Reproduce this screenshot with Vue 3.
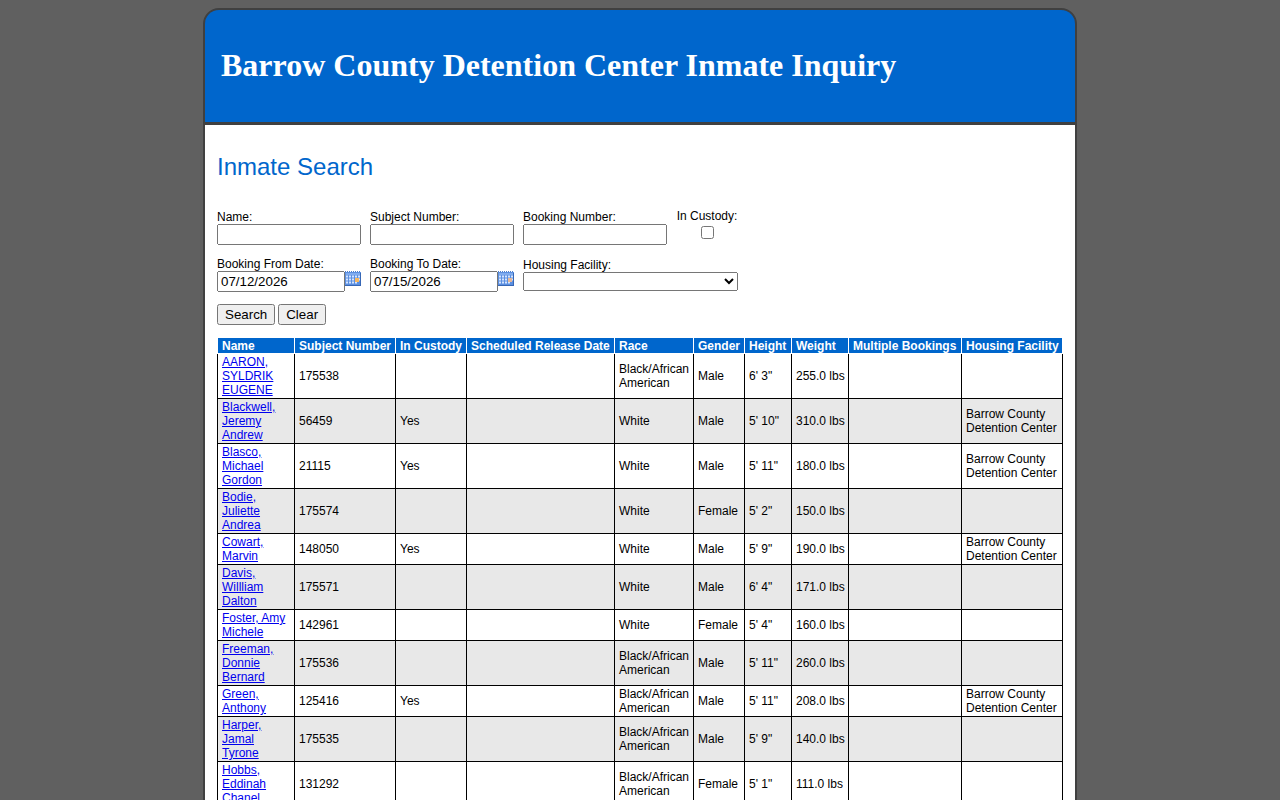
<script setup>
import { ref } from 'vue'

const name = ref('')
const subject = ref('')
const booking = ref('')
const fromDate = ref('07/12/2026')
const toDate = ref('07/15/2026')
const custody = ref(false)
const facility = ref('')

const center = 'Barrow County Detention Center'
const black = 'Black/African American'

const columns = [
  { label: 'Name', width: 77 },
  { label: 'Subject Number', width: 101 },
  { label: 'In Custody', width: 71 },
  { label: 'Scheduled Release Date', width: 148 },
  { label: 'Race', width: 79 },
  { label: 'Gender', width: 51 },
  { label: 'Height', width: 47 },
  { label: 'Weight', width: 57 },
  { label: 'Multiple Bookings', width: 113 },
  { label: 'Housing Facility', width: 101 }
]

const inmates = [
  ['AARON, SYLDRIK EUGENE', '175538', '', '', black, 'Male', '6\' 3"', '255.0 lbs', '', ''],
  ['Blackwell, Jeremy Andrew', '56459', 'Yes', '', 'White', 'Male', '5\' 10"', '310.0 lbs', '', center],
  ['Blasco, Michael Gordon', '21115', 'Yes', '', 'White', 'Male', '5\' 11"', '180.0 lbs', '', center],
  ['Bodie, Juliette Andrea', '175574', '', '', 'White', 'Female', '5\' 2"', '150.0 lbs', '', ''],
  ['Cowart, Marvin', '148050', 'Yes', '', 'White', 'Male', '5\' 9"', '190.0 lbs', '', center],
  ['Davis, Willliam Dalton', '175571', '', '', 'White', 'Male', '6\' 4"', '171.0 lbs', '', ''],
  ['Foster, Amy Michele', '142961', '', '', 'White', 'Female', '5\' 4"', '160.0 lbs', '', ''],
  ['Freeman, Donnie Bernard', '175536', '', '', black, 'Male', '5\' 11"', '260.0 lbs', '', ''],
  ['Green, Anthony', '125416', 'Yes', '', black, 'Male', '5\' 11"', '208.0 lbs', '', center],
  ['Harper, Jamal Tyrone', '175535', '', '', black, 'Male', '5\' 9"', '140.0 lbs', '', ''],
  ['Hobbs, Eddinah Chanel', '131292', '', '', black, 'Female', '5\' 1"', '111.0 lbs', '', '']
]

function clearForm() {
  name.value = subject.value = booking.value = facility.value = ''
  fromDate.value = toDate.value = ''
  custody.value = false
}
</script>

<template>
  <div class="page">
    <header class="banner">
      <h1>Barrow County Detention Center Inmate Inquiry</h1>
    </header>
    <main class="main">
      <h2>Inmate Search</h2>
      <form @submit.prevent>
        <div class="fields">
          <div class="field first">
            <label for="name">Name:</label>
            <input id="name" v-model="name" type="text" />
          </div>
          <div class="field first">
            <label for="subject">Subject Number:</label>
            <input id="subject" v-model="subject" type="text" />
          </div>
          <div class="field first">
            <label for="booking">Booking Number:</label>
            <input id="booking" v-model="booking" type="text" />
          </div>
          <div class="field check">
            <label for="custody">In Custody:</label>
            <input id="custody" v-model="custody" type="checkbox" />
          </div>
          <div class="field">
            <label for="from">Booking From Date:</label>
            <div class="date">
              <input id="from" v-model="fromDate" type="text" />
              <button type="button" class="cal" aria-label="Choose from date">
                <svg viewBox="0 0 16 15" width="16" height="15">
                  <rect y="1" width="16" height="14" fill="#5b8fe0" />
                  <path d="M0 .5H16" stroke="#4f7fca" stroke-dasharray="1 1" />
                  <rect x="1" y="2" width="14" height="2" fill="#7fabee" />
                  <path d="M1 5.5H15M1 8.5H15M1 11.5H12" stroke="#d5e5ff" stroke-width="2" stroke-dasharray="2 1" />
                  <rect x="10" y="7" width="4" height="4" fill="#f7b75e" />
                  <path d="M0 14.5H16M15.5 2V15" stroke="#3767b5" />
                </svg>
              </button>
            </div>
          </div>
          <div class="field">
            <label for="to">Booking To Date:</label>
            <div class="date">
              <input id="to" v-model="toDate" type="text" />
              <button type="button" class="cal" aria-label="Choose to date">
                <svg viewBox="0 0 16 15" width="16" height="15">
                  <rect y="1" width="16" height="14" fill="#5b8fe0" />
                  <path d="M0 .5H16" stroke="#4f7fca" stroke-dasharray="1 1" />
                  <rect x="1" y="2" width="14" height="2" fill="#7fabee" />
                  <path d="M1 5.5H15M1 8.5H15M1 11.5H12" stroke="#d5e5ff" stroke-width="2" stroke-dasharray="2 1" />
                  <rect x="10" y="7" width="4" height="4" fill="#e6b898" />
                  <path d="M0 14.5H16M15.5 2V15" stroke="#3767b5" />
                </svg>
              </button>
            </div>
          </div>
          <div class="field wide">
            <label for="facility">Housing Facility:</label>
            <select id="facility" v-model="facility">
              <option value=""></option>
              <option>{{ center }}</option>
            </select>
          </div>
        </div>
        <div class="actions">
          <button type="submit">Search</button>
          <button type="button" @click="clearForm">Clear</button>
        </div>
      </form>
      <table>
        <colgroup>
          <col v-for="c in columns" :key="c.label" :style="{ width: c.width + 'px' }" />
        </colgroup>
        <thead>
          <tr>
            <th v-for="c in columns" :key="c.label" scope="col">{{ c.label }}</th>
          </tr>
        </thead>
        <tbody>
          <tr v-for="row in inmates" :key="row[1]">
            <td v-for="(cell, i) in row" :key="i" :class="{ nowrap: i === 7 }">
              <a v-if="i === 0" href="#">{{ cell }}</a>
              <template v-else>{{ cell }}</template>
            </td>
          </tr>
        </tbody>
      </table>
    </main>
  </div>
</template>

<style>
body {
  margin: 0;
  background: #606060;
}
</style>

<style scoped>
.page {
  box-sizing: border-box;
  max-width: 874px;
  margin: 8px auto;
  border: 2px solid #404040;
  border-radius: 16px 16px 0 0;
  background: #404040;
  color: #000;
  font: 12px/14px "Liberation Sans", Arial, sans-serif;
}
.banner {
  padding: 37px 16px 38px;
  border-bottom: 3px solid #404040;
  border-radius: 14px 14px 0 0;
  background: #0066cc;
}
h1 {
  margin: 0;
  color: #fff;
  font: bold 32px/37px "Liberation Serif", "Times New Roman", serif;
}
.main {
  padding: 28px 12px 12px;
  background: #fff;
}
h2 {
  margin: 0 0 28px;
  color: #0066cc;
  font-weight: normal;
  font-size: 24px;
  line-height: 28px;
}
.fields {
  display: grid;
  grid-template-columns: repeat(3, 144px) 62px;
  gap: 12px 9px;
}
.field {
  display: flex;
  flex-direction: column;
}
.field.first {
  padding-top: 1px;
}
.field input[type='text'] {
  box-sizing: border-box;
  width: 100%;
  height: 21px;
}
.field.check {
  align-items: center;
  white-space: nowrap;
}
.check input {
  margin: 3px 3px 3px 4px;
}
.wide {
  grid-column: span 2;
  padding-top: 1px;
}
select {
  height: 19px;
}
input,
select,
button {
  font-family: "Liberation Sans", Arial, sans-serif;
}
.date {
  display: flex;
  align-items: flex-start;
}
.cal {
  flex: none;
  padding: 0;
  border: 0;
  background: none;
}
.cal svg {
  display: block;
}
.actions {
  display: flex;
  gap: 3px;
  margin: 12px 0;
}
table {
  width: 100%;
  table-layout: fixed;
  border-collapse: collapse;
}
th,
td {
  padding: 1px 4px;
  text-align: left;
}
th {
  padding-bottom: 0;
  border: 1px solid #fff;
  background: #0066cc;
  color: #fff;
  white-space: nowrap;
}
td {
  border: 1px solid #000;
}
.nowrap {
  padding-right: 3px;
  white-space: nowrap;
}
tbody tr:nth-child(even) {
  background: #e8e8e8;
}
a {
  color: #0000ee;
}
</style>
